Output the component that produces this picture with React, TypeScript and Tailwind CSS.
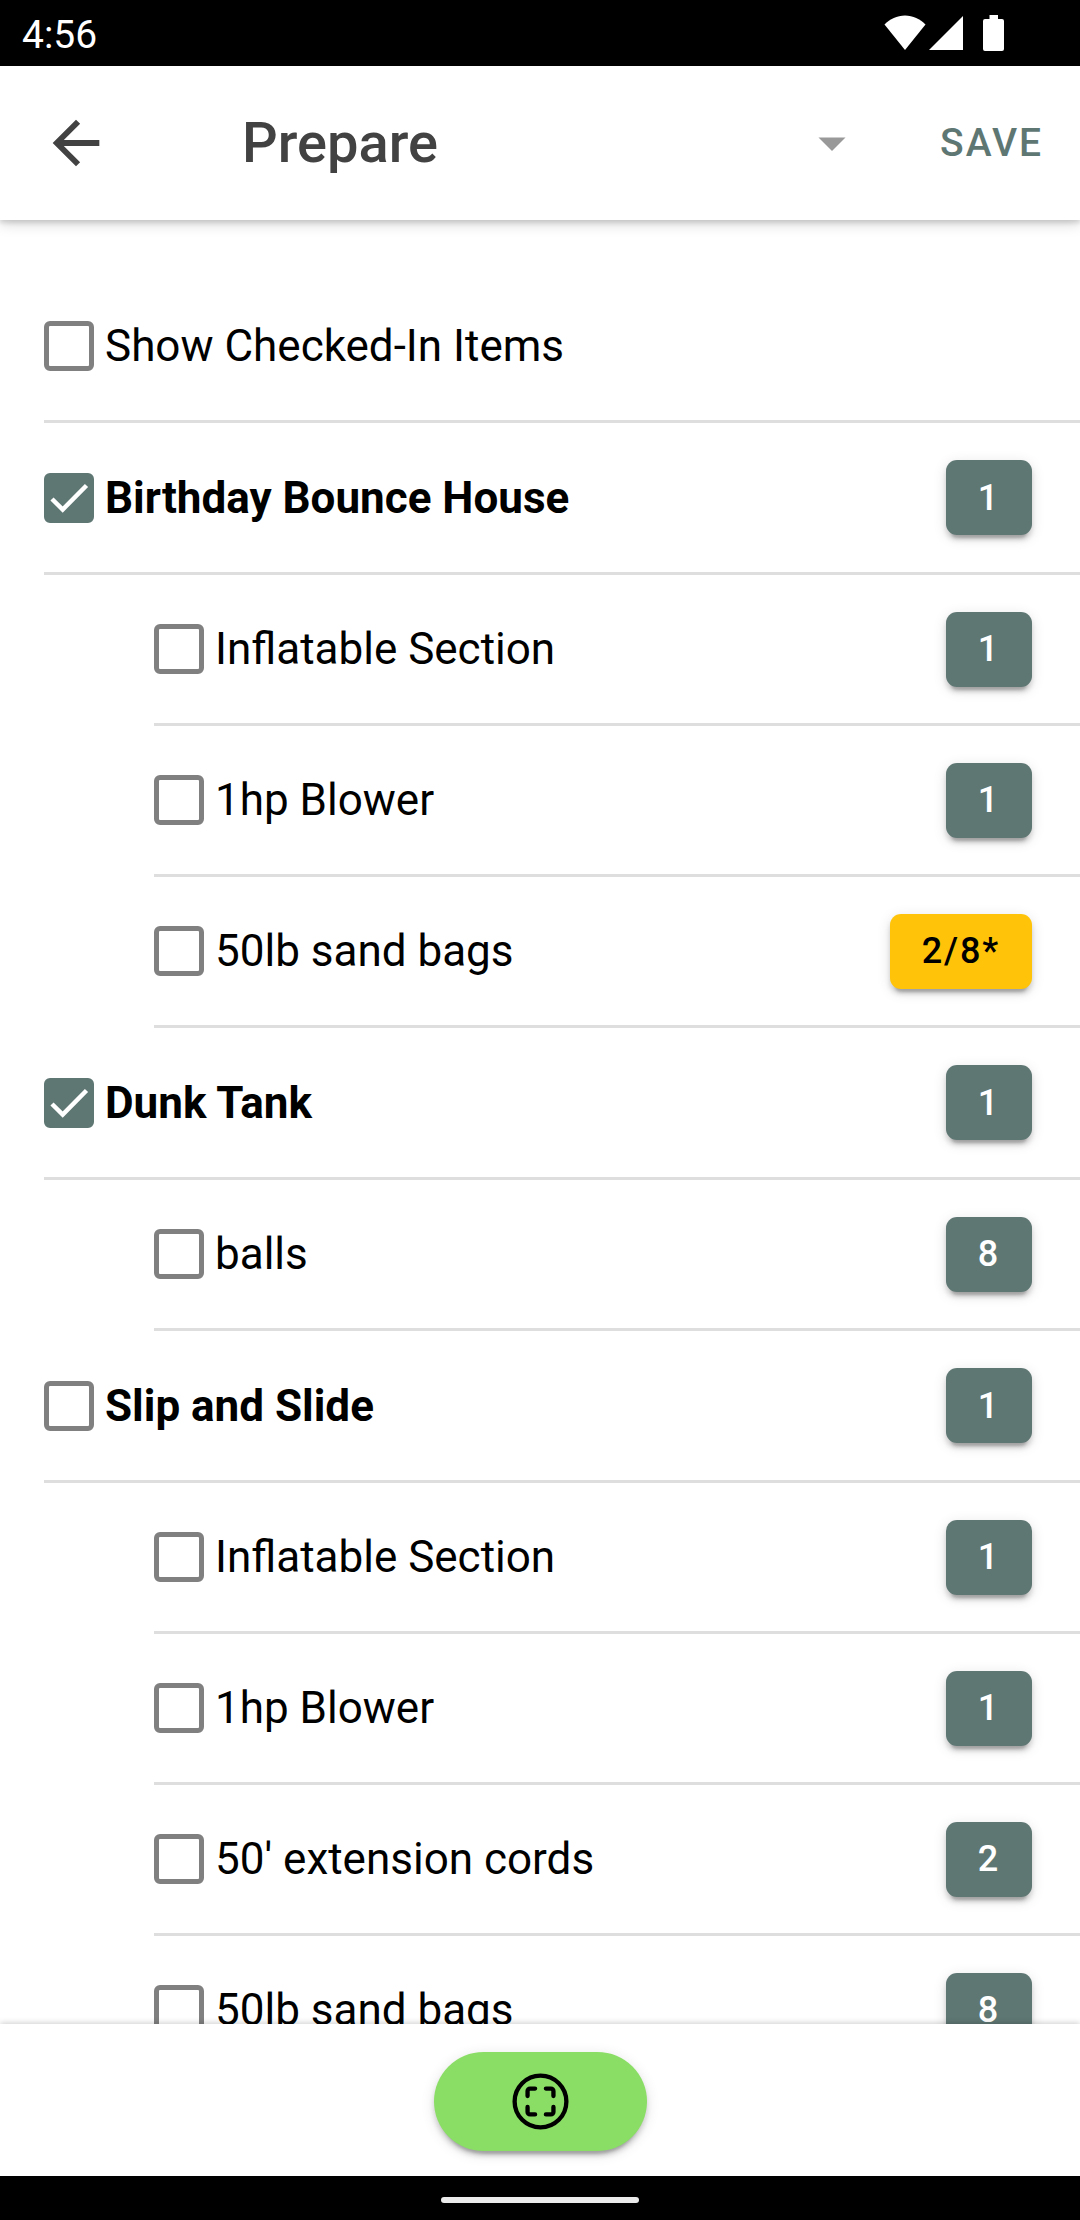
import { useState } from "react";

type Item = {
  id: string;
  label: string;
  count: string;
  group?: boolean;
  partial?: boolean;
};

const items: Item[] = [
  { id: "bounce-house", label: "Birthday Bounce House", count: "1", group: true },
  { id: "bounce-inflatable", label: "Inflatable Section", count: "1" },
  { id: "bounce-blower", label: "1hp Blower", count: "1" },
  { id: "bounce-bags", label: "50lb sand bags", count: "2/8*", partial: true },
  { id: "dunk-tank", label: "Dunk Tank", count: "1", group: true },
  { id: "dunk-balls", label: "balls", count: "8" },
  { id: "slide", label: "Slip and Slide", count: "1", group: true },
  { id: "slide-inflatable", label: "Inflatable Section", count: "1" },
  { id: "slide-blower", label: "1hp Blower", count: "1" },
  { id: "slide-cords", label: "50' extension cords", count: "2" },
  { id: "slide-bags", label: "50lb sand bags", count: "8" },
];

const raised =
  "shadow-[0_8px_3px_-5px_rgba(0,0,0,0.2),0_5px_5px_0_rgba(0,0,0,0.14),0_3px_14px_0_rgba(0,0,0,0.12)]";

function StatusBar() {
  return (
    <div className="flex h-[66px] shrink-0 items-center justify-between bg-black pl-[22px] pr-[76px] text-white">
      <span className="pt-1 text-[39px] leading-none">4:56</span>
      <div className="flex items-center" aria-hidden>
        <svg className="h-9 w-[42px]" viewBox="0 0 42 36" fill="currentColor">
          <path d="M21 35 0.5 9.5C6 4 13 0.5 21 0.5S36 4 41.500 9.500Z" />
        </svg>
        <svg className="ml-[3px] h-9 w-[34px]" viewBox="0 0 34 36" fill="currentColor">
          <path d="M34 1v34H0Z" />
        </svg>
        <svg className="ml-5 h-9 w-[21px]" viewBox="0 0 21 36" fill="currentColor">
          <path d="M6.500 0h8.500v4h4a2 2 0 0 1 2 2v28a2 2 0 0 1-2 2H2a2 2 0 0 1-2-2V6a2 2 0 0 1 2-2h4.500Z" />
        </svg>
      </div>
    </div>
  );
}

function Header() {
  return (
    <header className="relative z-10 flex h-[154px] shrink-0 items-center bg-white pl-[41px] pr-[37px] shadow-[0_2px_14px_0_rgba(0,0,0,0.22),0_3px_4px_0_rgba(0,0,0,0.1)]">
      <button type="button" aria-label="Back" className="text-[#424242]">
        <svg className="size-[70px]" viewBox="0 0 24 24" fill="currentColor">
          <path d="M20 11H7.830l5.590-5.590L12 4l-8 8 8 8 1.410-1.410L7.830 13H20v-2z" />
        </svg>
      </button>
      <div className="ml-[131px] flex flex-1 items-center">
        <select
          aria-label="Stage"
          defaultValue="prepare"
          className="min-w-0 flex-1 appearance-none bg-transparent text-[56px] font-medium leading-[66px] text-[#424242]"
        >
          <option value="prepare">Prepare</option>
          <option value="deliver">Deliver</option>
          <option value="return">Return</option>
        </select>
        <svg className="pointer-events-none h-4 w-7 text-[#999999]" viewBox="0 0 28 16" fill="currentColor" aria-hidden>
          <path d="M0.500 2.500h27L14 16Z" />
        </svg>
      </div>
      <button type="button" className="ml-[94px] text-[39px] font-medium leading-none tracking-wider text-[#5f7773]">
        SAVE
      </button>
    </header>
  );
}

function Checkbox({ id, checked, onChange }: { id: string; checked: boolean; onChange: () => void }) {
  return (
    <span className="grid size-[50px] shrink-0">
      <input
        id={id}
        type="checkbox"
        checked={checked}
        onChange={onChange}
        className="peer col-start-1 row-start-1 size-full appearance-none rounded-[6px] border-[5px] border-[#808080] bg-white checked:border-[#5f7773] checked:bg-[#5f7773]"
      />
      <svg
        className="pointer-events-none col-start-1 row-start-1 hidden size-full text-white peer-checked:block"
        viewBox="0 0 50 50"
        fill="none"
        stroke="currentColor"
        strokeWidth="4.5"
        aria-hidden
      >
        <path d="M8 26 18.700 36.500 42.500 12.500" />
      </svg>
    </span>
  );
}

function ItemRow({ item, checked, onToggle }: { item: Item; checked: boolean; onToggle: () => void }) {
  return (
    <li className={item.group ? "pl-11" : "pl-[154px]"}>
      <div
        className={`flex items-center border-b-[3px] border-[#dedede] pr-12 ${item.group ? "h-[152px]" : "h-[151px]"}`}
      >
        <Checkbox id={item.id} checked={checked} onChange={onToggle} />
        <label htmlFor={item.id} className={`flex-1 pl-[11px] text-[44px] ${item.group ? "font-bold" : ""}`}>
          {item.label}
        </label>
        <button
          type="button"
          className={`h-[75px] rounded-[11px] px-8 text-[36px] font-medium leading-none tracking-wider ${raised} ${
            item.partial ? "bg-[#ffc409] text-black" : "bg-[#5f7773] text-white"
          }`}
        >
          {item.count}
        </button>
      </div>
    </li>
  );
}

export default function App() {
  const [checked, setChecked] = useState<string[]>(["bounce-house", "dunk-tank"]);

  const toggle = (id: string) =>
    setChecked((prev) => (prev.includes(id) ? prev.filter((c) => c !== id) : [...prev, id]));

  return (
    <div className="flex h-screen flex-col bg-white font-[Roboto,sans-serif] text-black">
      <StatusBar />
      <Header />

      <main className="min-h-0 flex-1 overflow-y-auto pt-[52px] [scrollbar-width:none]">
        <div className="pl-11">
          <div className="flex h-[151px] items-center border-b-[3px] border-[#dedede]">
            <Checkbox id="show-checked" checked={checked.includes("show-checked")} onChange={() => toggle("show-checked")} />
            <label htmlFor="show-checked" className="flex-1 pl-[11px] text-[44px]">
              Show Checked-In Items
            </label>
          </div>
        </div>
        <ul>
          {items.map((item) => (
            <ItemRow key={item.id} item={item} checked={checked.includes(item.id)} onToggle={() => toggle(item.id)} />
          ))}
        </ul>
      </main>

      <footer className="relative z-10 flex h-[152px] shrink-0 items-center justify-center bg-white pt-[2px] shadow-[0_-1px_6px_0_rgba(0,0,0,0.2)]">
        <button
          type="button"
          aria-label="Scan"
          className={`flex h-[99px] w-[213px] items-center justify-center rounded-full bg-[#8ade65] ${raised}`}
        >
          <svg className="size-[69px]" viewBox="0 0 512 512" fill="none" stroke="currentColor" strokeWidth="32" strokeLinecap="round" strokeLinejoin="round">
            <circle cx="256" cy="256" r="192" />
            <path d="M296 352h37.330A18.670 18.670 0 0 0 352 333.330V296M352 216v-37.330A18.670 18.670 0 0 0 333.330 160H296M216 160h-37.330A18.670 18.670 0 0 0 160 178.670V216M160 296v37.330A18.670 18.670 0 0 0 178.670 352H216" />
          </svg>
        </button>
      </footer>

      <div className="flex h-11 shrink-0 items-center justify-center bg-black pt-1">
        <div className="h-[6px] w-[198px] rounded-full bg-[#ebebeb]" />
      </div>
    </div>
  );
}
